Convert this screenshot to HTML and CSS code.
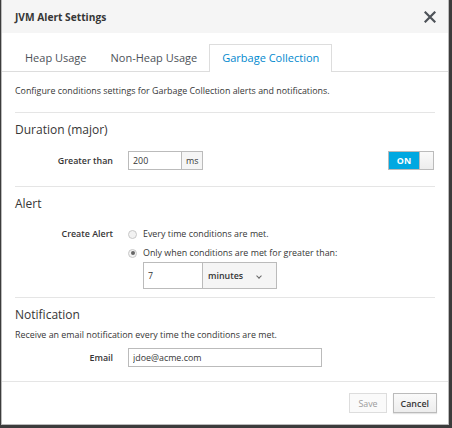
FILE: index.html
```html
<!DOCTYPE html>
<html>
<head>
<meta charset="utf-8">
<link rel="stylesheet" href="styles.css">
</head>
<body>
<div class="modal">
  <div class="modal-header">
    <h4 class="modal-title">JVM Alert Settings</h4>
    <svg class="close" width="12" height="12" viewBox="0 0 12 12"><path d="M1.5 1.5 L10.5 10.5 M10.5 1.5 L1.5 10.5" stroke="#4d5258" stroke-width="2.2" stroke-linecap="square"/></svg>
  </div>
  <ul class="tabs">
    <li class="tab">Heap Usage</li>
    <li class="tab">Non-Heap Usage</li>
    <li class="tab active">Garbage Collection</li>
  </ul>
  <div class="modal-body">
    <p class="desc">Configure conditions settings for Garbage Collection alerts and notifications.</p>
    <hr class="sep">
    <h3 class="section-title">Duration (major)</h3>
    <div class="row">
      <label class="label">Greater than</label>
      <div class="input-group">
        <input class="input small" value="200">
        <span class="addon">ms</span>
      </div>
      <div class="switch"><span class="switch-on">ON</span><span class="switch-handle"></span></div>
    </div>
    <hr class="sep sep-2">
    <h3 class="section-title">Alert</h3>
    <div class="row top alert-row">
      <label class="label">Create Alert</label>
      <div class="radios">
        <div class="radio"><span class="dot"></span>Every time conditions are met.</div>
        <div class="radio"><span class="dot checked"></span>Only when conditions are met for greater than:</div>
        <div class="input-group indent">
          <input class="input mid" value="7">
          <span class="select">minutes<span class="caret"></span></span>
        </div>
      </div>
    </div>
    <hr class="sep sep-3">
    <h3 class="section-title">Notification</h3>
    <p class="desc2">Receive an email notification every time the conditions are met.</p>
    <div class="row email-row">
      <label class="label">Email</label>
      <input class="input wide" value="jdoe@acme.com">
    </div>
  </div>
  <div class="modal-footer">
    <button class="btn disabled">Save</button>
    <button class="btn">Cancel</button>
  </div>
</div>
</body>
</html>
```

FILE: styles.css
```css
* { box-sizing: border-box; }
html, body { margin: 0; padding: 0; }
body {
  background: #3c3c3c;
  font-family: "Open Sans", "DejaVu Sans", sans-serif;
  font-size: 8.9px;
  color: #363636;
  width: 452px;
  height: 428px;
  overflow: hidden;
}
.modal {
  margin-left: 1px;
  width: 448px;
  height: 425px;
  background: #fff;
  border: 1px solid #bbb;
  border-top: none;
  display: flex;
  flex-direction: column;
}
.modal-header {
  height: 33px;
  background: #f5f5f5;
  display: flex;
  align-items: center;
  justify-content: space-between;
  padding: 0 12px 0 13px;
  flex: none;
}
.modal-title {
  margin: 0;
  font-size: 10.2px;
  font-weight: 700;
  color: #363636;
}
.close { display: block; }
.tabs {
  list-style: none;
  margin: 11px 0 0 0;
  padding: 0 0 0 11px;
  display: flex;
  border-bottom: 1px solid #ddd;
  height: 28px;
  flex: none;
}
.tab {
  padding: 0 11px;
  font-size: 11px;
  line-height: 26px;
  color: #4d5258;
  border: 1px solid transparent;
  border-bottom: none;
}
.tab.active {
  padding: 0 12px;
  color: #0088ce;
  border-color: #ddd;
  background: #fff;
  height: 28px;
}
.modal-body {
  padding: 0 13px 0 13px;
  flex: 1;
}
.desc { margin: 12px 0 0 0; line-height: 14px; }
.sep { border: none; border-top: 1px solid #e5e5e5; margin: 14px 0 0 0; }
.sep-2 { margin-top: 16px; }
.sep-3 { margin-top: 8px; }
.section-title {
  margin: 8px 0 0 0;
  font-size: 12px;
  font-weight: 400;
  line-height: 18px;
}
.row {
  display: flex;
  align-items: center;
  margin-top: 12px;
}
.row.top { align-items: flex-start; }
.alert-row { margin-top: 12px; }
.email-row { margin-top: 6px; }
.label {
  width: 98px;
  text-align: right;
  font-weight: 600;
  margin-right: 15px;
}
.alert-row .label { line-height: 18px; }
.input-group { display: flex; }
.input {
  font: inherit;
  color: #363636;
  height: 19px;
  border: 1px solid #bbb;
  padding: 0 4px;
  outline: none;
}
.input.small { width: 54px; }
.input.mid { width: 60px; height: 27px; }
.input.wide { width: 194px; }
.addon {
  height: 19px;
  line-height: 17px;
  border: 1px solid #bbb;
  border-left: none;
  background: #f5f5f5;
  padding: 0 4px;
}
.switch {
  margin-left: auto;
  margin-right: 1px;
  width: 46px;
  height: 19px;
  border: 1px solid #bbb;
  display: flex;
}
.switch-on {
  width: 30px;
  background: #00a8e1;
  color: #fff;
  font-weight: 700;
  text-align: center;
  line-height: 17px;
}
.switch-handle {
  flex: 1;
  background: linear-gradient(#fafafa, #ededed);
  border-left: 1px solid #bbb;
}
.radios { display: flex; flex-direction: column; }
.radio {
  display: flex;
  align-items: center;
  line-height: 18px;
}
.radio + .radio { margin-top: 1px; }
.dot {
  width: 9px;
  height: 9px;
  border-radius: 50%;
  border: 1px solid #c8c8c8;
  background: #f2f2f2;
  margin: 0 6px 0 0;
  position: relative;
}
.dot.checked::after {
  content: "";
  position: absolute;
  left: 1.5px; top: 1.5px;
  width: 4px; height: 4px;
  border-radius: 50%;
  background: #666;
}
.indent { margin: 0 0 0 15px; }
.select {
  width: 74px;
  height: 27px;
  border: 1px solid #bbb;
  border-left: none;
  background: #f5f5f5;
  padding: 0 5px;
  line-height: 25px;
  font-weight: 600;
  position: relative;
}
.caret {
  position: absolute;
  right: 15px;
  top: 11px;
  width: 4px;
  height: 4px;
  border-right: 1px solid #666;
  border-bottom: 1px solid #666;
  transform: rotate(45deg);
}
.desc2 { margin: 4px 0 0 0; line-height: 14px; }
.modal-footer {
  border-top: 1px solid #e5e5e5;
  height: 43px;
  flex: none;
  display: flex;
  align-items: center;
  justify-content: flex-end;
  padding: 0 11px 0 0;
  gap: 6px;
}
.btn {
  font: inherit;
  font-weight: 600;
  height: 20px;
  padding: 0 7px;
  border: 1px solid #bbb;
  background: linear-gradient(#fafafa, #ededed);
  color: #363636;
  box-shadow: 0 1px 1px rgba(0,0,0,0.1);
}
.btn.disabled {
  padding: 0 8px;
  color: #9c9c9c;
  border-color: #ddd;
  background: #fafafa;
  box-shadow: none;
  font-weight: 400;
}
```
